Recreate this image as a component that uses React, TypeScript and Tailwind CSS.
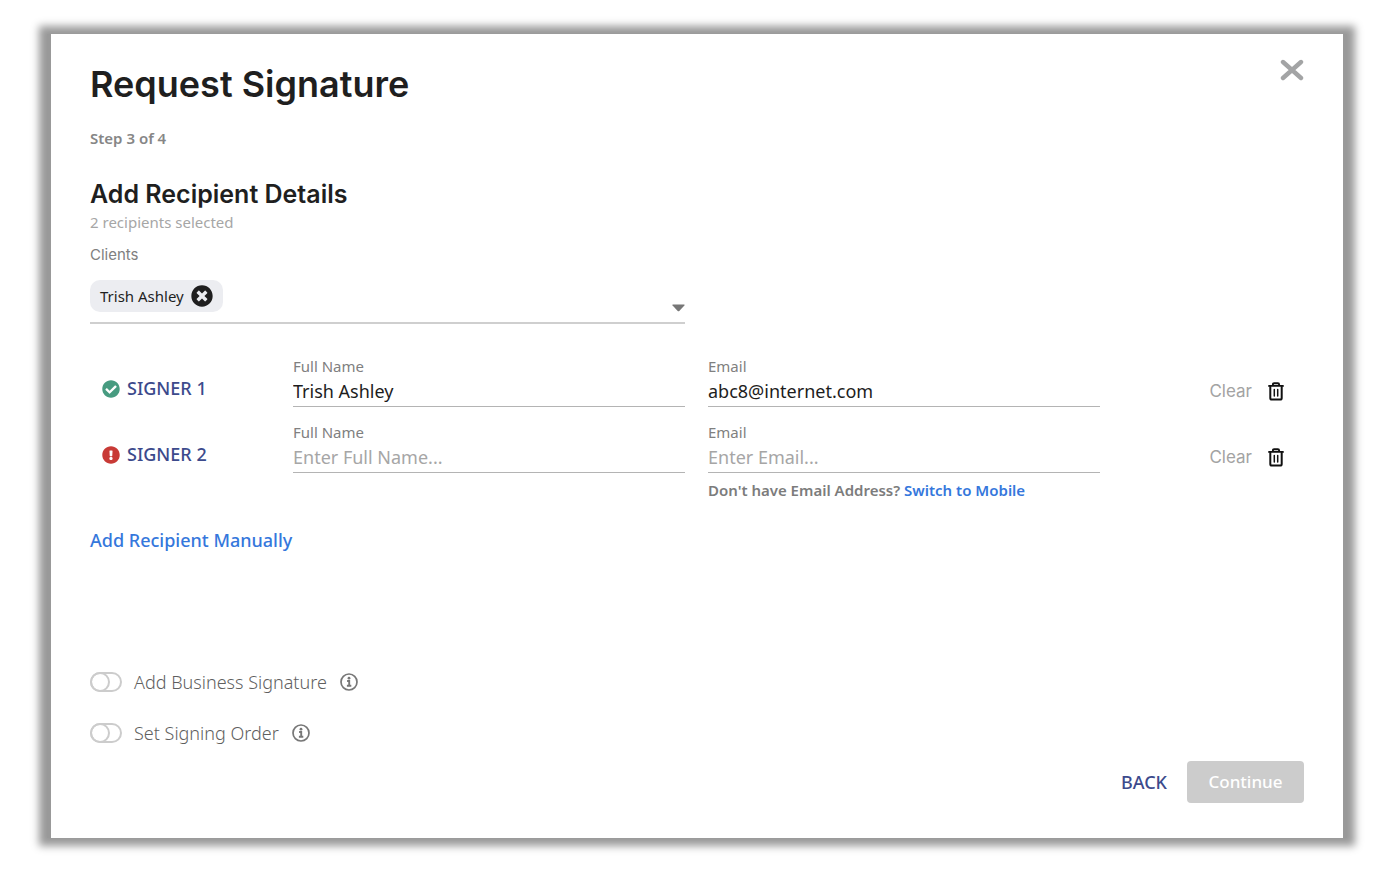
import { useState } from 'react';
import { FaCheckCircle, FaExclamationCircle, FaTimesCircle } from 'react-icons/fa';

type Signer = {
  id: number;
  name: string;
  email: string;
};

const INITIAL_SIGNERS: Signer[] = [
  { id: 1, name: 'Trish Ashley', email: 'abc8@internet.com' },
  { id: 2, name: '', email: '' },
];

const OPTIONS = ['Add Business Signature', 'Set Signing Order'];

function CloseIcon() {
  return (
    <svg className="h-[22px] w-6" viewBox="0 0 24 22" fill="none" stroke="#a3a4a5" strokeWidth="4.4" strokeLinecap="round">
      <path d="M3 3 L21 19 M21 3 L3 19" />
    </svg>
  );
}

function TrashIcon() {
  return (
    <svg className="h-[19px] w-4" viewBox="0 0 16 19" fill="none" stroke="#111" strokeLinecap="round" strokeLinejoin="round">
      <path strokeWidth="1.9" d="M1 3.9 H15 M4.9 3.7 V2.4 Q4.9 1.2 6.1 1.2 H9.9 Q11.1 1.2 11.1 2.4 V3.7" />
      <path strokeWidth="2" d="M2.3 4 V16 Q2.3 17.6 3.9 17.6 H12.1 Q13.7 17.6 13.7 16 V4" />
      <path strokeWidth="1.5" d="M6.3 7.4 V14 M9.7 7.4 V14" />
    </svg>
  );
}

function InfoIcon() {
  return (
    <svg className="size-[18px]" viewBox="0 0 18 18" fill="none">
      <circle cx="9" cy="9" r="8" stroke="#777" strokeWidth="1.7" />
      <circle cx="9" cy="5.2" r="1.4" fill="#777" />
      <path d="M7.1 8 H9.2 V12.6 M6.9 12.8 H11.3" stroke="#777" strokeWidth="1.9" />
    </svg>
  );
}

function Field({ id, label, value, placeholder, onChange }: {
  id: string;
  label: string;
  value: string;
  placeholder: string;
  onChange: (value: string) => void;
}) {
  return (
    <div className="flex flex-col">
      <label htmlFor={id} className="text-[15px] leading-5 text-[#808080]">{label}</label>
      <input
        id={id}
        value={value}
        placeholder={placeholder}
        onChange={e => onChange(e.target.value)}
        className="h-[31px] w-full border-b border-[#b4b4b4] text-[18px] text-[#1d1d1d] outline-none placeholder:text-[#a6a6a6]"
      />
    </div>
  );
}

function SignerRow({ signer, onChange, onRemove }: {
  signer: Signer;
  onChange: (signer: Signer) => void;
  onRemove: () => void;
}) {
  const complete = signer.name !== '' && signer.email !== '';

  return (
    <div className="grid grid-cols-[180px_1fr_1fr_181px] gap-x-[23px]">
      <div className="flex h-[51px] items-center gap-[7px] pt-[14px] pl-3 text-[18px] font-medium text-[#3c4a8c]">
        {complete
          ? <FaCheckCircle className="size-[18px] text-[#479b80]" />
          : <FaExclamationCircle className="size-[18px] text-[#c83a36]" />}
        SIGNER {signer.id}
      </div>
      <Field
        id={`name-${signer.id}`}
        label="Full Name"
        value={signer.name}
        placeholder="Enter Full Name..."
        onChange={name => onChange({ ...signer, name })}
      />
      <div>
        <Field
          id={`email-${signer.id}`}
          label="Email"
          value={signer.email}
          placeholder="Enter Email..."
          onChange={email => onChange({ ...signer, email })}
        />
        {!complete && (
          <p className="mt-[7px] text-[15px] leading-5 font-semibold text-[#7c7c7c]">
            Don't have Email Address? <a href="#mobile" className="text-[#3577dc]">Switch to Mobile</a>
          </p>
        )}
      </div>
      <div className="flex h-[51px] items-center justify-end gap-4 pt-5 pr-5">
        <button
          type="button"
          onClick={() => onChange({ ...signer, name: '', email: '' })}
          className="font-[Inter,sans-serif] text-[17px] text-[#a3a3a3]"
        >
          Clear
        </button>
        <button type="button" aria-label={`Remove signer ${signer.id}`} onClick={onRemove}>
          <TrashIcon />
        </button>
      </div>
    </div>
  );
}

export default function App() {
  const [signers, setSigners] = useState(INITIAL_SIGNERS);
  const [clients, setClients] = useState(['Trish Ashley']);

  return (
    <main className="min-h-screen bg-white pt-[34px] pr-[45px] pb-[46px] pl-[47px] font-['Noto_Sans',sans-serif]">
      <div className="bg-[#999] px-1 shadow-[0_0_8px_8px_#999]">
        <section className="bg-white px-[39px] pt-[30px] pb-[35px]">
          <header className="flex items-start justify-between">
            <h1 className="font-[Inter,sans-serif] text-[36px] leading-10 font-semibold text-[#1f1f1f]">Request Signature</h1>
            <button type="button" aria-label="Close" className="-mt-[5px]">
              <CloseIcon />
            </button>
          </header>
          <p className="mt-6 text-[15px] leading-5 font-semibold text-[#868686]">Step 3 of 4</p>

          <h2 className="mt-8 font-[Inter,sans-serif] text-[25px] leading-7 font-semibold text-[#1f1f1f]">Add Recipient Details</h2>
          <p className="mt-1 text-[15px] leading-5 text-[#a6a6a6]">2 recipients selected</p>

          <label htmlFor="clients" className="mt-[13px] block font-[Inter,sans-serif] text-[15px] leading-5 text-[#808080]">Clients</label>
          <div className="mt-[15px] flex w-[49%] border-b-2 border-[#cfcfcf] pb-[10px]">
            {clients.map(client => (
              <span key={client} className="flex h-8 items-center gap-[7px] rounded-[10px] bg-[#ecedf1] px-[10px] text-[15px] text-[#1f1f1f]">
                {client}
                <button type="button" aria-label={`Remove ${client}`} onClick={() => setClients(clients.filter(c => c !== client))}>
                  <FaTimesCircle className="size-[22px]" />
                </button>
              </span>
            ))}
            <div className="relative h-8 flex-1">
              <select id="clients" className="h-full w-full appearance-none bg-transparent outline-none" />
              <svg className="pointer-events-none absolute right-0 bottom-0 h-2 w-[13px]" viewBox="0 0 13 8" fill="#777">
                <path d="M0.8 0.6 H12.2 Q12.9 0.8 12.4 1.5 L7.3 6.9 Q6.5 7.5 5.7 6.9 L0.6 1.5 Q0.1 0.8 0.8 0.6 Z" />
              </svg>
            </div>
          </div>

          <div className="mt-8 flex flex-col gap-[15px]">
            {signers.map(signer => (
              <SignerRow
                key={signer.id}
                signer={signer}
                onChange={next => setSigners(signers.map(s => (s.id === next.id ? next : s)))}
                onRemove={() => setSigners(signers.filter(s => s.id !== signer.id))}
              />
            ))}
          </div>

          <button
            type="button"
            onClick={() => setSigners([...signers, { id: signers.length + 1, name: '', email: '' }])}
            className="mt-7 block text-[18px] leading-6 font-medium text-[#3577dc]"
          >
            Add Recipient Manually
          </button>

          <div className="mt-[118px] flex flex-col gap-[27px]">
            {OPTIONS.map(option => (
              <div key={option} className="flex items-center gap-[13px]">
                <label className="flex items-center gap-3 text-[18px] leading-6 font-light text-[#5f5f5f]">
                  <input
                    type="checkbox"
                    role="switch"
                    className="h-5 w-8 appearance-none rounded-full border-2 border-[#ccc] before:-m-[2px] before:block before:size-5 before:rounded-full before:border-2 before:border-[#ccc] checked:before:ml-[10px]"
                  />
                  {option}
                </label>
                <button type="button" aria-label={`About ${option}`}>
                  <InfoIcon />
                </button>
              </div>
            ))}
          </div>

          <footer className="mt-4 flex items-center justify-end gap-5">
            <button type="button" className="text-[18px] font-medium text-[#3c4a8c]">BACK</button>
            <button type="button" disabled className="h-[42px] w-[117px] rounded bg-[#ccc] text-[17px] font-medium text-white">Continue</button>
          </footer>
        </section>
      </div>
    </main>
  );
}
